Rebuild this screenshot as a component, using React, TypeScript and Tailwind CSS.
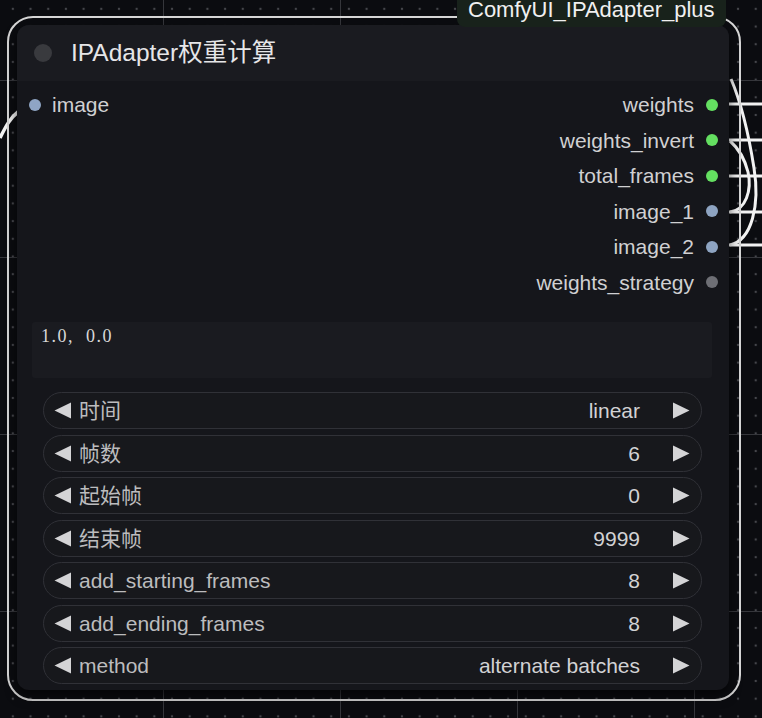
import React from "react"

const FONT = "font-['Liberation_Sans','Noto_Sans_CJK_SC',sans-serif]"

const outputs = [
  { name: "weights", color: "bg-[#64df61]" },
  { name: "weights_invert", color: "bg-[#64df61]" },
  { name: "total_frames", color: "bg-[#64df61]" },
  { name: "image_1", color: "bg-[#8ea4c2]" },
  { name: "image_2", color: "bg-[#8ea4c2]" },
  { name: "weights_strategy", color: "bg-[#6e6f75]" },
]

const widgets = [
  { label: "时间", value: "linear" },
  { label: "帧数", value: "6" },
  { label: "起始帧", value: "0" },
  { label: "结束帧", value: "9999" },
  { label: "add_starting_frames", value: "8" },
  { label: "add_ending_frames", value: "8" },
  { label: "method", value: "alternate batches" },
]

const Arrow = ({ dir }: { dir: "left" | "right" }) => (
  <svg width="17" height="17" viewBox="0 0 17 17" className="shrink-0">
    <polygon points={dir === "left" ? "17,0.5 17,16.5 0.5,8.5" : "0,0.5 0,16.5 16.5,8.5"} fill="#d4d4d6" />
  </svg>
)

const WidgetRow = ({ label, value }: { label: string; value: string }) => (
  <div className="flex h-[37px] items-center rounded-full border-[1.5px] border-[#303137] bg-[#17181c] pl-[10px] pr-[11px]">
    <Arrow dir="left" />
    <span className="ml-[8px] flex-1 text-[21px] leading-none text-[#bcbcbe]">{label}</span>
    <span className="text-[21px] leading-none text-[#d2d2d4]">{value}</span>
    <span className="ml-[33px]">
      <Arrow dir="right" />
    </span>
  </div>
)

export default function App() {
  return (
    <div
      className={`relative h-[718px] w-[762px] overflow-hidden bg-[#0b0c10] bg-[image:linear-gradient(to_right,#35363b_1px,transparent_1px),linear-gradient(to_bottom,#35363b_1px,transparent_1px),radial-gradient(circle,#45464b_1px,transparent_1.6px)] bg-[size:177px_177px,177px_177px,17.7px_17.7px] bg-[position:163px_0,0_80px,4px_0px] ${FONT}`}
    >
      {/* wires */}
      <svg className="absolute left-0 top-0" width="762" height="718" fill="none">
        <path d="M0 138 C 6 126, 10 118, 19 111" stroke="#f2f2f2" strokeWidth="3.5" />
        <path d="M729 104 H762" stroke="#f2f2f2" strokeWidth="3" />
        <path d="M729 140 H762" stroke="#f2f2f2" strokeWidth="3" />
        <path d="M729 176 H762" stroke="#f2f2f2" strokeWidth="3" />
        <path d="M729 212 H762" stroke="#f2f2f2" strokeWidth="3" />
        <path d="M729 245 H762" stroke="#f2f2f2" strokeWidth="3" />
        <path d="M730 212 C 746 210, 752 190, 748 172 C 744 156, 738 148, 730 141" stroke="#f2f2f2" strokeWidth="3" />
        <path d="M730 245 C 752 240, 760 205, 754 168 C 748 130, 740 100, 731 79" stroke="#f2f2f2" strokeWidth="3" />
      </svg>

      {/* selection outline */}
      <div className="absolute left-[7px] top-[16px] h-[685px] w-[734px] rounded-[26px] border-2 border-[#d6d6d6]" />

      {/* node */}
      <div className="absolute left-[17px] top-[25px] flex h-[665px] w-[712px] flex-col rounded-[12px] bg-[#15161b] shadow-[0_6px_12px_rgba(0,0,0,0.6)]">
        {/* title */}
        <div className="flex h-[56px] shrink-0 items-center gap-[19px] rounded-t-[12px] bg-[#1a1b20] pl-[17px]">
          <div className="h-[18px] w-[18px] rounded-full bg-[#393a3e]" />
          <span className="text-[24.5px] leading-none text-[#e6e6e8]">IPAdapter权重计算</span>
        </div>

        {/* slots */}
        <div className="flex pt-[6px]">
          <div className="flex h-[35.5px] items-center gap-[11px] pl-[12px]">
            <div className="h-[12px] w-[12px] rounded-full bg-[#8fa5c5]" />
            <span className="text-[21px] leading-none text-[#d0d0d2]">image</span>
          </div>
          <div className="ml-auto flex flex-col items-end pr-[11px]">
            {outputs.map((o) => (
              <div key={o.name} className="flex h-[35.5px] items-center gap-[12px]">
                <span className="text-[21px] leading-none text-[#d0d0d2]">{o.name}</span>
                <div className={`h-[12px] w-[12px] rounded-full ${o.color}`} />
              </div>
            ))}
          </div>
        </div>

        {/* text area */}
        <div className="ml-[15px] mr-[17px] mt-[22px] h-[56px] shrink-0 rounded-[3px] bg-[#1a1b20] px-[9px] pt-[1px]">
          <span className="whitespace-pre font-['Liberation_Serif',serif] text-[18px] tracking-[1.5px] text-[#d8d8d8]">
            {"1.0,  0.0"}
          </span>
        </div>

        {/* widgets */}
        <div className="ml-[26px] mr-[27px] mt-[14px] flex flex-col gap-[5.5px]">
          {widgets.map((w) => (
            <WidgetRow key={w.label} label={w.label} value={w.value} />
          ))}
        </div>
      </div>

      {/* badge */}
      <div className="absolute left-[457px] top-[-8px] flex h-[35px] items-center rounded-b-[8px] bg-[#18221b] px-[11px]">
        <span className="text-[22px] leading-none text-[#f0f0f0]">ComfyUI_IPAdapter_plus</span>
      </div>
    </div>
  )
}
